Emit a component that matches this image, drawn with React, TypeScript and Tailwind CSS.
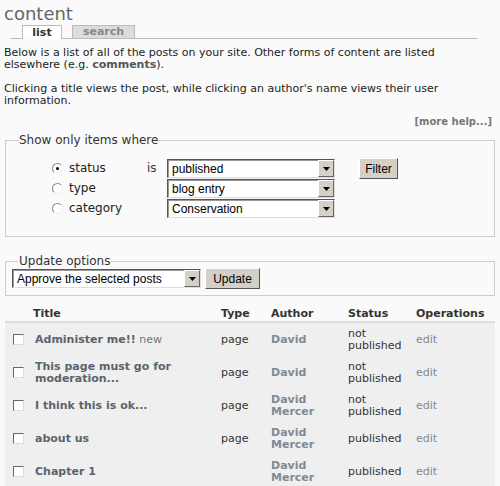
import React from "react";

const font = { fontFamily: '"DejaVu Sans", Verdana, sans-serif' };

function Select({ value, w }: { value: string; w: string }) {
  return (
    <div className={`flex h-[19px] ${w} items-stretch border border-t-[#555] border-l-[#555] border-b-[#ddd] border-r-[#ddd] bg-white`}>
      <div className="flex flex-1 items-center border-t border-l border-[#999] pl-[3px] text-[12px] text-black" style={{ fontFamily: '"Liberation Sans", Arial, sans-serif' }}>
        {value}
      </div>
      <div className="flex w-[16px] items-center justify-center border border-t-white border-l-white border-b-[#666] border-r-[#666] bg-[#d4d0c8]">
        <svg width="7" height="4" viewBox="0 0 7 4"><path d="M0 0h7L3.5 4z" fill="#000" /></svg>
      </div>
    </div>
  );
}

function Button({ label, w }: { label: string; w: string }) {
  return (
    <div className={`flex h-[21px] ${w} items-center justify-center border border-t-white border-l-white border-b-[#555] border-r-[#555] bg-[#d4d0c8] text-[12px] text-black`} style={{ fontFamily: '"Liberation Sans", Arial, sans-serif' }}>
      {label}
    </div>
  );
}

function Radio({ checked }: { checked?: boolean }) {
  return (
    <span className="relative inline-block h-[11px] w-[11px] rounded-full border border-t-[#888] border-l-[#888] border-b-[#eee] border-r-[#eee] bg-white">
      {checked && <span className="absolute left-[3px] top-[3px] h-[3px] w-[3px] rounded-full bg-black" />}
    </span>
  );
}

function Check() {
  return <span className="inline-block h-[11px] w-[11px] border border-t-[#666] border-l-[#666] border-b-[#ddd] border-r-[#ddd] bg-white" />;
}

const rows = [
  { title: ["Administer me!!"], isNew: true, type: "page", author: ["David"], status: ["not", "published"] },
  { title: ["This page must go for", "moderation..."], type: "page", author: ["David"], status: ["not", "published"] },
  { title: ["I think this is ok..."], type: "page", author: ["David", "Mercer"], status: ["not", "published"] },
  { title: ["about us"], type: "page", author: ["David", "Mercer"], status: ["published"] },
  { title: ["Chapter 1"], type: "", author: ["David", "Mercer"], status: ["published"] },
];

export default function App() {
  return (
    <div className="h-[486px] w-[500px] overflow-hidden bg-[#fafafa] text-[11px] leading-[12px] text-[#222]" style={font}>
      <div className="pl-[4px] pt-[5px] text-[18px] leading-[18px] text-[#666]">content</div>
      <div className="ml-[10px] mr-[22px] mt-[2px] flex h-[14px] items-end gap-[10px] border-b border-[#bbb] pl-[12px]">
        <div className="-mb-px flex h-[14px] w-[40px] items-center justify-center border border-b-0 border-[#bbb] bg-white font-bold text-[#333]">list</div>
        <div className="flex h-[13px] w-[63px] items-center justify-center border border-b-0 border-[#bbb] bg-[#dcdcdc] font-bold text-[#888]">search</div>
      </div>
      <p className="mt-[8px] pl-[4px]">
        Below is a list of all of the posts on your site. Other forms of content are listed<br />
        elsewhere (e.g. <span className="font-bold text-[#555]">comments</span>).
      </p>
      <p className="mt-[12px] pl-[4px]">
        Clicking a title views the post, while clicking an author's name views their user<br />
        information.
      </p>
      <div className="mt-[9px] pr-[8px] text-right text-[10px] font-bold text-[#777]">[more help...]</div>

      <fieldset className="mx-[5px] mt-[6px] h-[103px] border border-[#ccc] px-[12px]">
        <legend className="px-[1px] text-[12px] leading-[12px] text-[#333]">Show only items where</legend>
        <div className="mt-[12px] flex">
          <div className="ml-[34px] flex flex-col">
            {[
              ["status", true],
              ["type", false],
              ["category", false],
            ].map(([l, c]) => (
              <div key={l as string} className="flex h-[20px] items-center text-[12px]">
                <Radio checked={c as boolean} />
                <span className="ml-[6px] w-[78px]">{l as string}</span>
                <span className="w-[20px] text-[#333]">{l === "status" ? "is" : ""}</span>
              </div>
            ))}
          </div>
          <div className="flex flex-col gap-[1px] pt-[1px]">
            <Select value="published" w="w-[168px]" />
            <Select value="blog entry" w="w-[168px]" />
            <Select value="Conservation" w="w-[168px]" />
          </div>
          <div className="ml-[24px]">
            <Button label="Filter" w="w-[39px]" />
          </div>
        </div>
      </fieldset>

      <fieldset className="mx-[5px] mt-[18px] h-[41px] border border-[#ccc] px-[6px]">
        <legend className="ml-[6px] px-[1px] text-[12px] leading-[12px] text-[#333]">Update options</legend>
        <div className="mt-[1px] flex items-center gap-[4px]">
          <Select value="Approve the selected posts" w="w-[189px]" />
          <Button label="Update" w="w-[55px]" />
        </div>
      </fieldset>

      <div className="mx-[5px] mt-[11px]">
        <div className="flex h-[16px] items-center border-b-2 border-[#ddd] font-bold text-[#333]">
          <span className="w-[216px] pl-[28px]">Title</span>
          <span className="w-[50px]">Type</span>
          <span className="w-[77px]">Author</span>
          <span className="w-[68px]">Status</span>
          <span>Operations</span>
        </div>
        <div className="bg-[#efefef]">
          {rows.map((r, i) => (
            <div key={i} className="flex h-[33px] items-center">
              <span className="flex w-[30px] justify-start pl-[8px]"><Check /></span>
              <span className="w-[186px] font-bold text-[#5a646d]">
                {r.title.map((t, j) => (
                  <div key={j}>
                    {t}
                    {r.isNew && <span className="font-normal text-[#777]"> new</span>}
                  </div>
                ))}
              </span>
              <span className="w-[50px] text-[#333]">{r.type}</span>
              <span className="w-[77px] font-bold text-[#7e8a95]">
                {r.author.map((a) => (
                  <div key={a}>{a}</div>
                ))}
              </span>
              <span className="w-[68px] text-[#333]">
                {r.status.map((s) => (
                  <div key={s}>{s}</div>
                ))}
              </span>
              <span className="text-[#7e8a95]">edit</span>
            </div>
          ))}
        </div>
      </div>
    </div>
  );
}
